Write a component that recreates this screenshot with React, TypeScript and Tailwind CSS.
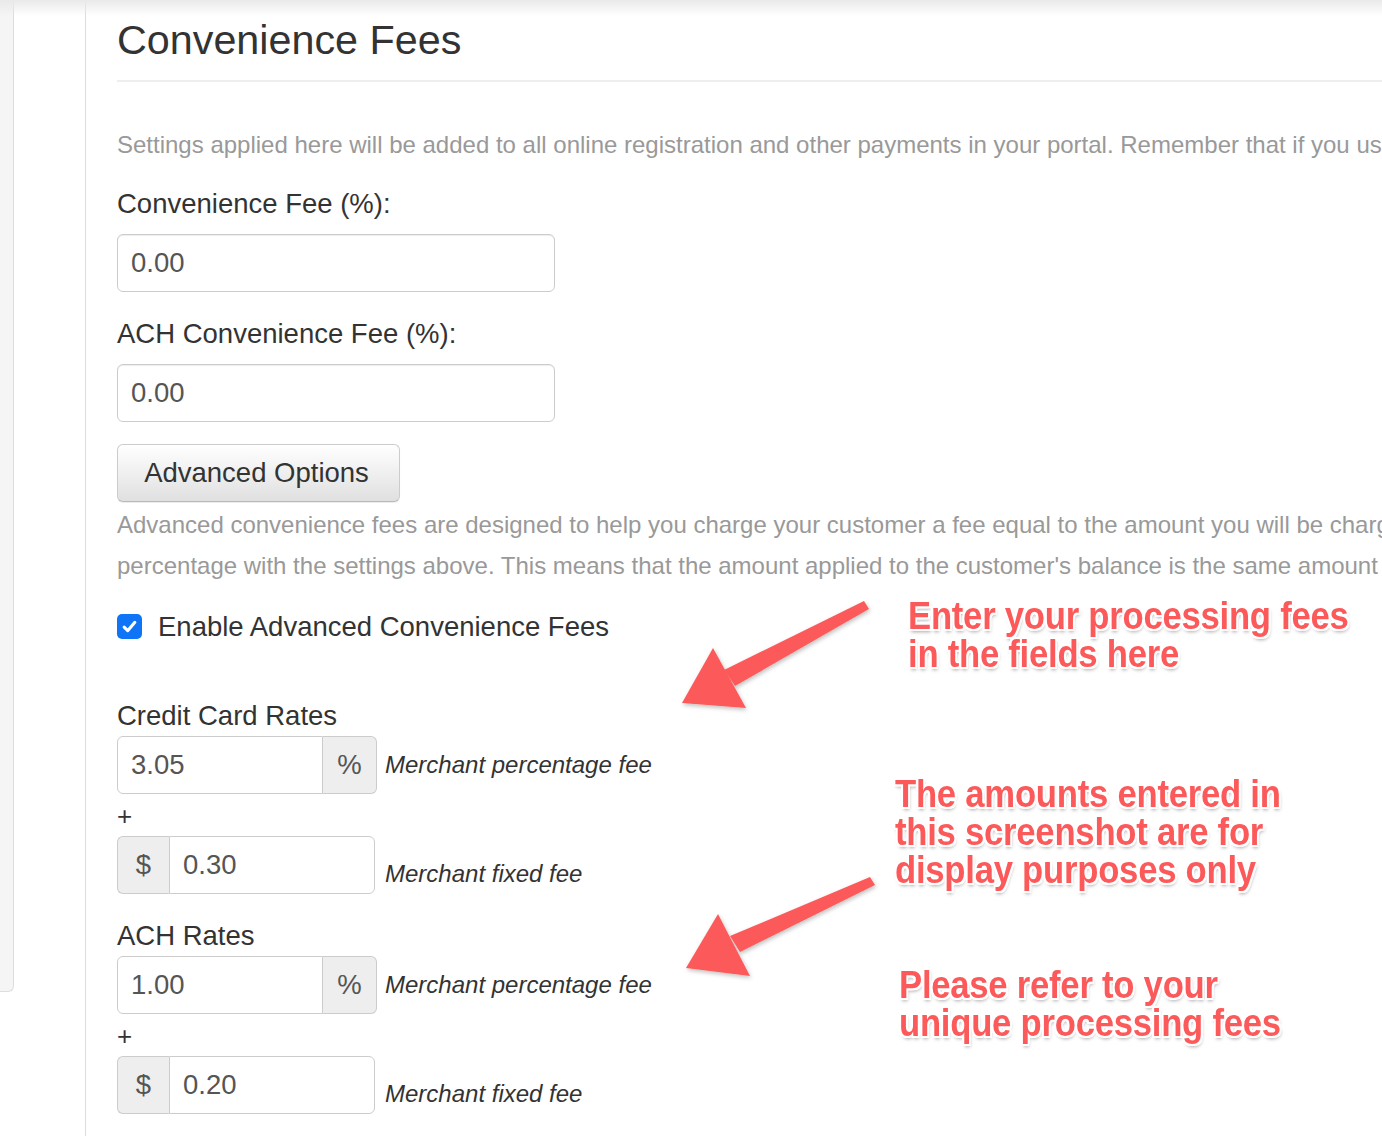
import React from "react";

const note =
  "absolute origin-top-left scale-x-[0.89] whitespace-nowrap font-['Liberation_Sans',Arial,sans-serif] font-bold text-[39px] leading-[38px] tracking-[-0.3px] text-[#fc5a5a] [text-shadow:-2px_-2px_0_#fff,2px_-2px_0_#fff,-2px_2px_0_#fff,2px_2px_0_#fff,0_-2px_0_#fff,0_2px_0_#fff,-2px_0_0_#fff,2px_0_0_#fff,1px_3px_4px_rgba(0,0,0,0.35)]";

const Label = ({ children }: { children: React.ReactNode }) => (
  <div className="text-[27.5px] leading-[39px] text-[#333]">{children}</div>
);

const TextInput = ({ value }: { value: string }) => (
  <div className="mt-[11px] flex h-[58px] w-[438px] items-center rounded-[6px] border border-[#ccc] pl-[13px] text-[27.5px] text-[#555] shadow-[inset_0_1px_1px_rgba(0,0,0,0.075)]">
    {value}
  </div>
);

const RateBlock = ({ title, pct, fixed }: { title: string; pct: string; fixed: string }) => (
  <div>
    <Label>{title}</Label>
    <div className="mt-[1px] flex items-center">
      <div className="flex h-[58px]">
        <div className="flex w-[206px] items-center rounded-l-[6px] border border-[#ccc] pl-[13px] text-[27.5px] text-[#555]">
          {pct}
        </div>
        <div className="flex w-[54px] items-center justify-center rounded-r-[6px] border border-l-0 border-[#ccc] bg-[#eee] text-[27.5px] text-[#555]">
          %
        </div>
      </div>
      <span className="ml-[8px] text-[24px] italic leading-[34px] text-[#333]">Merchant percentage fee</span>
    </div>
    <div className="h-[42px] pt-[2px] text-[26px] leading-[40px] text-[#333]">+</div>
    <div className="flex items-start">
      <div className="flex h-[58px]">
        <div className="flex w-[52px] items-center justify-center rounded-l-[6px] border border-r-0 border-[#ccc] bg-[#eee] text-[27.5px] text-[#555]">
          $
        </div>
        <div className="flex w-[206px] items-center rounded-r-[6px] border border-[#ccc] pl-[13px] text-[27.5px] text-[#555]">
          {fixed}
        </div>
      </div>
      <span className="ml-[10px] mt-[21px] text-[24px] italic leading-[34px] text-[#333]">Merchant fixed fee</span>
    </div>
  </div>
);

export default function App() {
  return (
    <div className="relative h-[1136px] w-[1382px] overflow-hidden bg-white font-['Liberation_Sans',Arial,sans-serif]">
      <div className="flex h-full">
        <div className="h-[992px] w-[14px] rounded-br-[6px] border-r border-b border-[#ddd] bg-[#f5f5f5]" />
        <div className="w-[71px]" />
        <main className="min-w-0 flex-1 border-l border-[#ddd] pl-[31px]">
          <h1 className="mt-[18px] text-[41.3px] leading-[45px] text-[#333]">Convenience Fees</h1>
          <hr className="mt-[17px] border-t-2 border-[#eee]" />
          <p className="mt-[46px] whitespace-nowrap text-[24px] leading-[34px] text-[#999]">
            Settings applied here will be added to all online registration and other payments in your portal. Remember that if you use a payment processor that charges fees
          </p>

          <div className="mt-[22px]">
            <Label>Convenience Fee (%):</Label>
            <TextInput value="0.00" />
          </div>
          <div className="mt-[22px]">
            <Label>ACH Convenience Fee (%):</Label>
            <TextInput value="0.00" />
          </div>

          <button className="mt-[22px] flex h-[58px] w-[283px] items-center justify-center rounded-[6px] border border-[#ccc] border-b-[#b9b9b9] bg-linear-to-b from-white to-[#e0e0e0] pr-[4px] text-[27.5px] text-[#333] shadow-[0_1px_1px_rgba(0,0,0,0.075)]">
            Advanced Options
          </button>

          <div className="mt-[2px] whitespace-nowrap text-[24px] leading-[41px] text-[#999]">
            <div>Advanced convenience fees are designed to help you charge your customer a fee equal to the amount you will be charged by</div>
            <div>percentage with the settings above. This means that the amount applied to the customer's balance is the same amount</div>
          </div>

          <label className="mt-[21px] flex h-[39px] items-center gap-[16px]">
            <span className="flex h-[25px] w-[25px] items-center justify-center rounded-[5px] bg-[#0f74f5]">
              <svg viewBox="0 0 16 16" className="h-[19px] w-[19px]">
                <path d="M3.5 8.5l3 3 6-7" fill="none" stroke="#fff" strokeWidth="2.6" strokeLinecap="round" strokeLinejoin="round" />
              </svg>
            </span>
            <span className="text-[27.5px] text-[#333]">Enable Advanced Convenience Fees</span>
          </label>

          <div className="mt-[50px]">
            <RateBlock title="Credit Card Rates" pct="3.05" fixed="0.30" />
          </div>
          <div className="mt-[22px]">
            <RateBlock title="ACH Rates" pct="1.00" fixed="0.20" />
          </div>
        </main>
      </div>

      {/* header shadow */}
      <div className="pointer-events-none absolute inset-x-0 top-0 h-[16px] bg-linear-to-b from-[#e9e9e9] to-transparent" />

      {/* annotations */}
      <svg className="pointer-events-none absolute left-0 top-0" width="1382" height="1136" viewBox="0 0 1382 1136">
        <defs>
          <filter id="sh" x="-20%" y="-20%" width="140%" height="140%">
            <feDropShadow dx="1" dy="2" stdDeviation="2" floodColor="#000" floodOpacity="0.25" />
          </filter>
        </defs>
        <g fill="#fc5a5a" filter="url(#sh)">
          <polygon points="864,601 869,609 735,686 724,670" />
          <polygon points="713,648 682,703 746,708" />
          <polygon points="870,877 875,885 740,952 730,936" />
          <polygon points="718,914 686,968 750,976" />
        </g>
      </svg>
      <div className={note} style={{ left: 908, top: 597 }}>
        <div>Enter your processing fees</div>
        <div>in the fields here</div>
      </div>
      <div className={note} style={{ left: 895, top: 775 }}>
        <div>The amounts entered in</div>
        <div>this screenshot are for</div>
        <div>display purposes only</div>
      </div>
      <div className={note} style={{ left: 899, top: 966 }}>
        <div>Please refer to your</div>
        <div>unique processing fees</div>
      </div>
    </div>
  );
}
